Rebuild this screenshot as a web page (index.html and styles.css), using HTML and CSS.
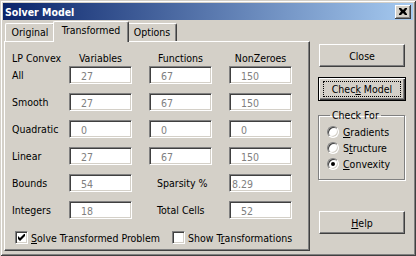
FILE: index.html
```html
<!DOCTYPE html>
<html lang="en">
<head>
  <meta charset="UTF-8">
  <title>Solver Model</title>
  <link rel="stylesheet" href="styles.css">
</head>
<body>
  <div class="window">
    <div class="titlebar">
      <span class="title">Solver Model</span>
      <span class="close-x">
        <svg width="8" height="7" viewBox="0 0 8 7"><path d="M0 0h2l2 2 2-2h2v1l-2 2.5 2 2.5v1h-2l-2-2-2 2h-2v-1l2-2.5-2-2.5z" fill="#000"/></svg>
      </span>
    </div>

    <div class="client">
      <div class="tab-area">
        <div class="tabs">
          <div class="tab tab-original">Original</div>
          <div class="tab tab-active">Transformed</div>
          <div class="tab tab-options">Options</div>
        </div>

        <div class="panel">
          <div class="row head">
            <span class="label">LP Convex</span>
            <span class="col-head">Variables</span>
            <span class="col-head">Functions</span>
            <span class="col-head">NonZeroes</span>
          </div>

          <div class="rows">
            <div class="row">
              <span class="label">All</span>
              <span class="field">27</span>
              <span class="field">67</span>
              <span class="field">150</span>
            </div>
            <div class="row">
              <span class="label">Smooth</span>
              <span class="field">27</span>
              <span class="field">67</span>
              <span class="field">150</span>
            </div>
            <div class="row">
              <span class="label">Quadratic</span>
              <span class="field">0</span>
              <span class="field">0</span>
              <span class="field">0</span>
            </div>
            <div class="row">
              <span class="label">Linear</span>
              <span class="field">27</span>
              <span class="field">67</span>
              <span class="field">150</span>
            </div>
            <div class="row">
              <span class="label">Bounds</span>
              <span class="field">54</span>
              <span class="label inner">Sparsity %</span>
              <span class="field tight">8.29</span>
            </div>
            <div class="row">
              <span class="label">Integers</span>
              <span class="field">18</span>
              <span class="label inner">Total Cells</span>
              <span class="field">52</span>
            </div>
          </div>

          <div class="checks">
            <label class="check first">
              <span class="box">
                <svg width="7" height="7" viewBox="0 0 7 7"><path d="M0 2v3l2 2 5-5v-3l-5 5z" fill="#000"/></svg>
              </span>
              <span><u>S</u>olve Transformed Problem</span>
            </label>
            <label class="check">
              <span class="box"></span>
              <span>Show T<u>r</u>ansformations</span>
            </label>
          </div>
        </div>
      </div>

      <div class="side">
        <div class="btn">Close</div>
        <div class="btn default"><span class="focus">Chec<u>k</u> Model</span></div>

        <fieldset class="group">
          <legend>Check For</legend>
          <label class="radio-row"><span class="radio"></span><span><u>G</u>radients</span></label>
          <label class="radio-row"><span class="radio"></span><span>S<u>t</u>ructure</span></label>
          <label class="radio-row"><span class="radio checked"></span><span><u>C</u>onvexity</span></label>
        </fieldset>

        <div class="btn help"><span><u>H</u>elp</span></div>
      </div>
    </div>
  </div>
</body>
</html>
```

FILE: styles.css
```css
body {
  margin: 0;
  font-family: "DejaVu Sans", sans-serif;
  font-stretch: condensed;
  font-size: 10.5px;
  color: #000;
  background: #d4d0c8;
}
.window {
  width: 416px;
  height: 256px;
  box-sizing: border-box;
  padding: 3px;
  background: #d4d0c8;
  box-shadow: inset 1px 1px #d4d0c8, inset -1px -1px #404040, inset 2px 2px #fff, inset -2px -2px #808080;
}
.titlebar {
  height: 17px;
  display: flex;
  align-items: center;
  justify-content: space-between;
  padding: 0 2px;
  background: linear-gradient(to right, #0a246a, #a6caf0);
}
.title {
  color: #fff;
  font-weight: bold;
}
.close-x {
  width: 16px;
  height: 14px;
  box-sizing: border-box;
  display: flex;
  align-items: center;
  justify-content: center;
  background: #d4d0c8;
  box-shadow: inset -1px -1px #404040, inset 1px 1px #fff, inset -2px -2px #808080;
}
.client {
  display: flex;
  gap: 8px;
  padding: 1px 0 0 1px;
}

/* tabs */
.tab-area {
  width: 306px;
}
.tabs {
  display: flex;
  align-items: flex-end;
  height: 20px;
  padding-left: 1px;
}
.tab {
  box-sizing: border-box;
  height: 18px;
  padding-top: 2px;
  text-align: center;
  border-top: 1px solid #fff;
  border-left: 1px solid #fff;
  border-right: 1px solid #404040;
  border-radius: 2px 2px 0 0;
  box-shadow: inset -1px 0 #808080;
}
.tab-original {
  width: 50px;
}
.tab-options {
  width: 50px;
}
.tab-active {
  position: relative;
  z-index: 1;
  width: 76px;
  height: 21px;
  margin: 0 -2px -1px;
  padding-top: 2px;
  background: #d4d0c8;
}
.panel {
  box-sizing: border-box;
  height: 210px;
  padding: 9px 0 0 7px;
  border-top: 1px solid #fff;
  border-left: 1px solid #fff;
  border-right: 1px solid #404040;
  border-bottom: 1px solid #404040;
  box-shadow: inset -1px -1px #808080;
}

/* grid of counts */
.row {
  display: grid;
  grid-template-columns: 57px 80px 80px 63px;
  align-items: center;
  height: 18px;
}
.row.head {
  height: 14px;
  margin-bottom: 1px;
}
.col-head {
  width: 63px;
  text-align: center;
  white-space: nowrap;
}
.rows {
  display: flex;
  flex-direction: column;
  gap: 9px;
}
.label {
  white-space: nowrap;
}
.label.inner {
  padding-left: 8px;
}
.field {
  box-sizing: border-box;
  width: 63px;
  height: 18px;
  line-height: 14px;
  padding: 2px 0 0 11px;
  color: #808080;
  background: #fff;
  border-top: 1px solid #808080;
  border-left: 1px solid #808080;
  border-right: 1px solid #fff;
  border-bottom: 1px solid #fff;
  box-shadow: inset 1px 1px #404040, inset -1px -1px #d4d0c8;
}
.field.tight {
  padding-left: 2px;
}

/* check boxes */
.checks {
  display: flex;
  align-items: center;
  height: 13px;
  margin-top: 12px;
  padding-left: 3px;
}
.check {
  display: flex;
  align-items: center;
  gap: 3px;
}
.check.first {
  width: 157px;
}
.box {
  box-sizing: border-box;
  width: 13px;
  height: 13px;
  display: flex;
  align-items: center;
  justify-content: center;
  background: #fff;
  border-top: 1px solid #808080;
  border-left: 1px solid #808080;
  border-right: 1px solid #fff;
  border-bottom: 1px solid #fff;
  box-shadow: inset 1px 1px #404040, inset -1px -1px #d4d0c8;
}

/* right column */
.side {
  width: 88px;
  padding-top: 23px;
}
.btn {
  box-sizing: border-box;
  width: 86px;
  height: 23px;
  margin-left: 1px;
  display: flex;
  align-items: center;
  justify-content: center;
  border-top: 1px solid #fff;
  border-left: 1px solid #fff;
  border-right: 1px solid #404040;
  border-bottom: 1px solid #404040;
  box-shadow: inset -1px -1px #808080;
}
.btn.default {
  width: 88px;
  height: 24px;
  margin: 10px 0 0;
  border: 1px solid #000;
  box-shadow: inset 1px 1px #fff, inset -1px -1px #404040, inset -2px -2px #808080;
}
.focus {
  box-sizing: border-box;
  width: 78px;
  height: 16px;
  line-height: 14px;
  text-align: center;
  border: 1px dotted #000;
}
.group {
  box-sizing: border-box;
  width: 87px;
  margin: 8px 0 0;
  padding: 2px 0 7px 8px;
  border: 1px solid #808080;
  box-shadow: inset 1px 1px #fff, 1px 1px #fff;
}
.group legend {
  margin-left: 3px;
  padding: 0 2px;
  line-height: 13px;
}
.radio-row {
  display: flex;
  align-items: center;
  gap: 4px;
  height: 16px;
}
.radio {
  box-sizing: border-box;
  width: 12px;
  height: 12px;
  display: flex;
  align-items: center;
  justify-content: center;
  border-radius: 50%;
  background: #fff;
  border: 1px solid;
  border-color: #808080 #fff #fff #808080;
  box-shadow: inset 1px 1px #404040, inset -1px -1px #d4d0c8;
}
.radio.checked::after {
  content: "";
  width: 4px;
  height: 4px;
  border-radius: 50%;
  background: #000;
}
.btn.help {
  margin-top: 31px;
}
```
